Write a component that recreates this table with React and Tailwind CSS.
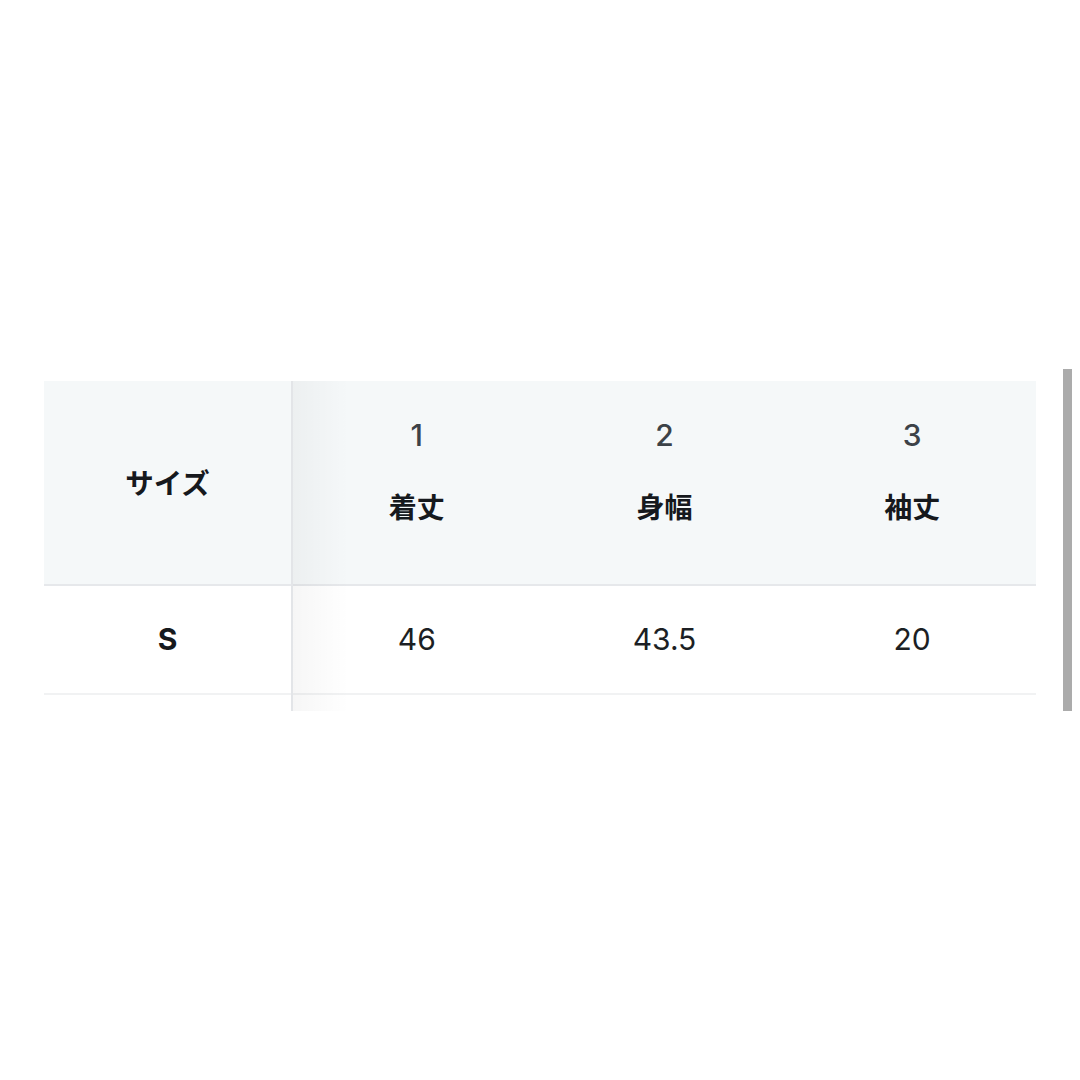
import React from "react";

const font = { fontFamily: '"Inter", "Noto Sans CJK JP", sans-serif' };

function HeadCell({ num, label }) {
  return (
    <div className="flex-1 flex flex-col items-center pt-[34px]">
      <div className="h-[40px] leading-[40px] text-[30px] text-[#3c4248] font-medium">{num}</div>
      <div className="mt-[33px] h-[40px] leading-[40px] text-[28px] font-bold text-[#16191d]">{label}</div>
    </div>
  );
}

function BodyCell({ v }) {
  return (
    <div className="flex-1 flex items-center justify-center text-[30px] text-[#1c1f24]">{v}</div>
  );
}

export default function App() {
  return (
    <div className="w-[1080px] h-[1080px] bg-white" style={font}>
      <div className="pt-[369px] flex">
        <div className="ml-[44px] mt-[12px] w-[992px] h-[330px] overflow-hidden flex">
          <div className="w-[247px] shrink-0 flex flex-col">
            <div className="h-[203px] pt-[4px] bg-[#f5f8f9] flex items-center justify-center text-[28.5px] font-bold text-[#16191d]">サイズ</div>
            <div className="h-[2px] bg-[#e6e8eb]" />
            <div className="h-[107px] flex items-center justify-center text-[30px] font-bold text-[#16191d]">S</div>
            <div className="h-[2px] bg-[#f1f2f3]" />
            <div className="flex-1" />
          </div>
          <div className="w-[2px] shrink-0 bg-[#e3e5e8]" />
          <div className="flex-1 relative flex flex-col">
            <div className="h-[203px] bg-[#f5f8f9] flex">
              <HeadCell num="1" label="着丈" />
              <HeadCell num="2" label="身幅" />
              <HeadCell num="3" label="袖丈" />
            </div>
            <div className="h-[2px] bg-[#e6e8eb]" />
            <div className="h-[107px] flex">
              <BodyCell v="46" />
              <BodyCell v="43.5" />
              <BodyCell v="20" />
            </div>
            <div className="h-[2px] bg-[#f1f2f3]" />
            <div className="flex-1" />
            <div className="absolute left-0 top-0 bottom-0 w-[56px] bg-gradient-to-r from-[rgba(0,0,0,0.035)] to-transparent pointer-events-none" />
          </div>
        </div>
        <div className="ml-[27px] w-[9px] h-[342px] bg-[#ababab]" />
      </div>
    </div>
  );
}
